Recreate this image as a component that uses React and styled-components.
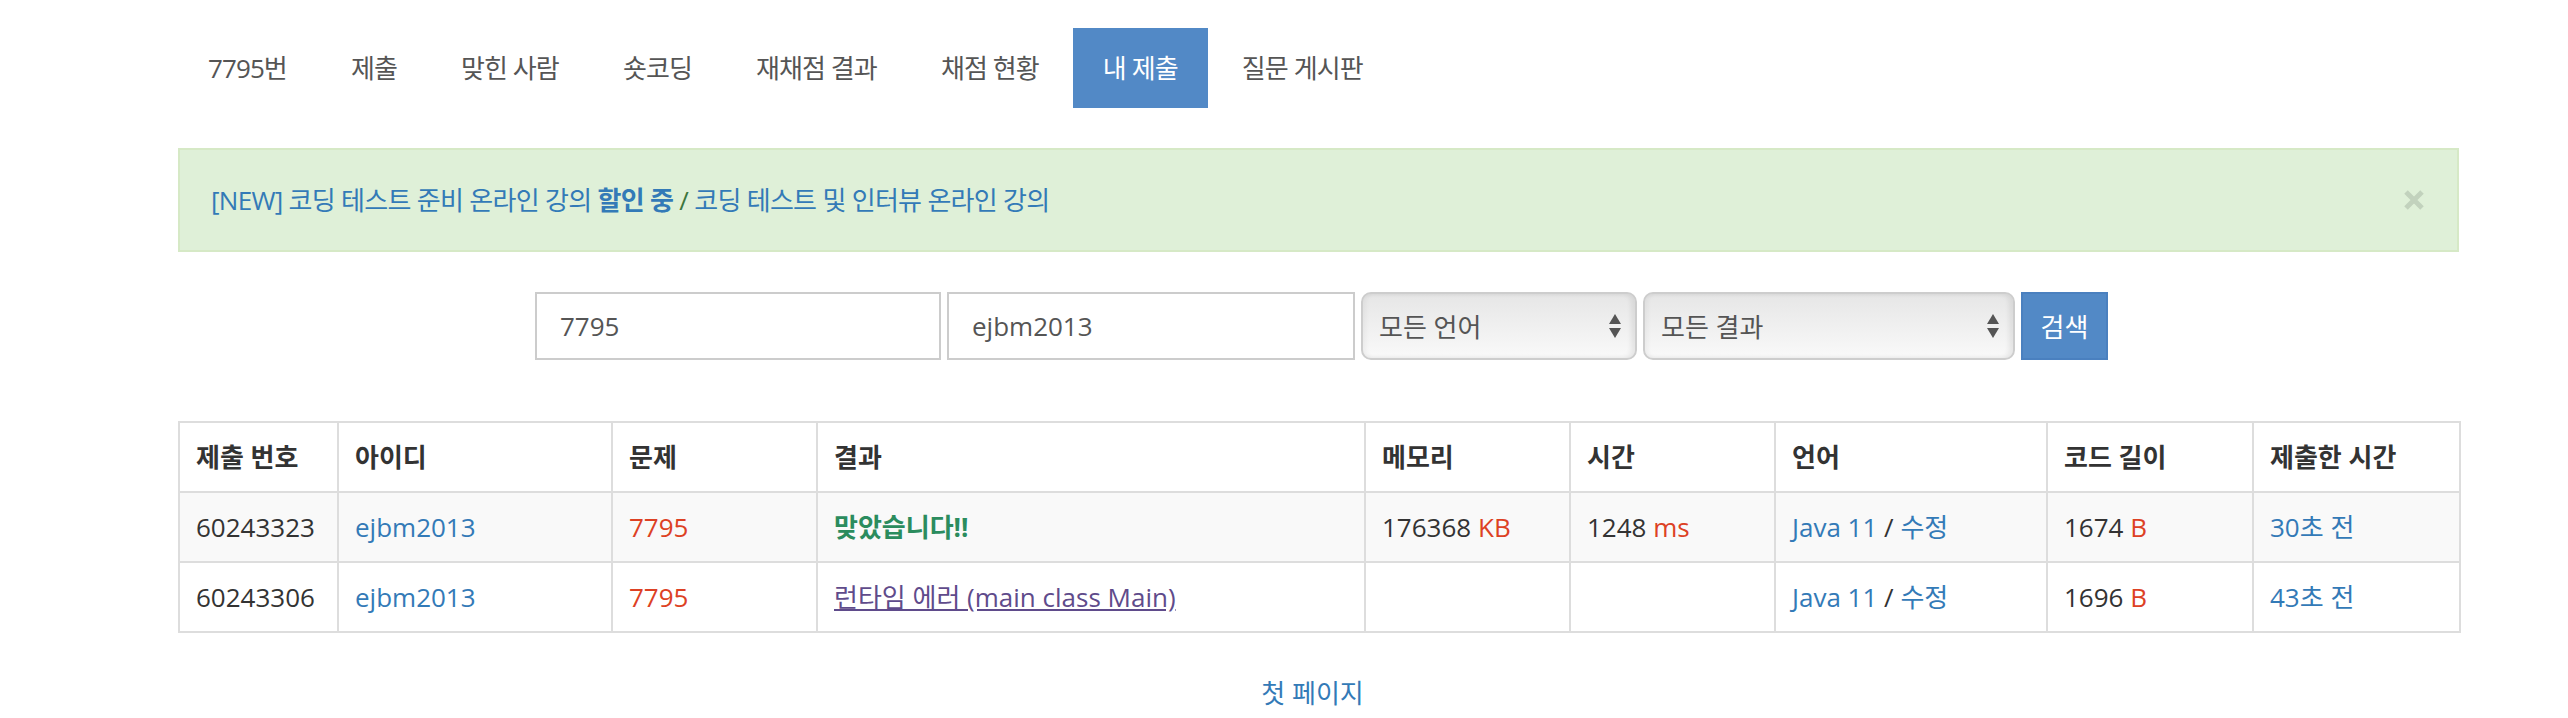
import React from "react";
import styled, { createGlobalStyle } from "styled-components";

const GlobalStyle = createGlobalStyle`
  html, body { margin: 0; padding: 0; background: #fff; }
  body {
    font-family: "Open Sans", "Noto Sans CJK KR", sans-serif;
    font-size: 26px;
    color: #333;
  }
  * { box-sizing: border-box; }
`;

const Page = styled.div`
  width: 2281px;
  margin-left: 178px;
  padding-top: 28px;
  padding-bottom: 20px;
`;

const Nav = styled.ul`
  display: flex;
  gap: 4px;
  margin: 0;
  padding: 0;
  list-style: none;
`;

const NavLink = styled.li`
  padding: 20px 30px;
  line-height: 40px;
  letter-spacing: -0.9px;
  color: ${(p) => (p.$active ? "#fff" : "#555")};
  background: ${(p) => (p.$active ? "#5289c6" : "transparent")};
  white-space: nowrap;
`;

const Alert = styled.div`
  margin-top: 40px;
  display: flex;
  align-items: center;
  justify-content: space-between;
  background: #dff0d8;
  border: 2px solid #d6e9c6;
  padding: 31px 33px 31px 31px;
  line-height: 38px;
  letter-spacing: -0.7px;
  color: #3c763d;
`;

const Link = styled.a`
  color: ${(p) => p.$color || "#337ab7"};
  font-weight: ${(p) => (p.$bold ? "bold" : "normal")};
  text-decoration: ${(p) => (p.$underline ? "underline" : "none")};
`;

const Close = styled.span`
  display: flex;
  width: 20px;
  height: 20px;
`;

const SearchForm = styled.div`
  margin-top: 40px;
  display: flex;
  justify-content: center;
  gap: 6px;
  padding-left: 6px;
`;

const Input = styled.input`
  width: ${(p) => p.$w}px;
  height: 68px;
  border: 2px solid #ccc;
  border-radius: 0;
  padding: 0 23px;
  font: inherit;
  font-size: 26px;
  color: #555;
  background: #fff;
  outline: none;
`;

const SelectBox = styled.div`
  width: ${(p) => p.$w}px;
  height: 68px;
  display: flex;
  align-items: center;
  justify-content: space-between;
  padding: 0 14px 0 16px;
  border: 2px solid #cdcdcd;
  border-radius: 10px;
  background: linear-gradient(#e6e6e6, #f9f9f9);
  box-shadow: inset -4px 0 5px rgba(0, 0, 0, 0.07), inset 3px 0 4px rgba(0, 0, 0, 0.04);
  color: #555;
`;

const Button = styled.button`
  width: 87px;
  height: 68px;
  border: 2px solid #4a80bf;
  background: #5289c6;
  color: #fff;
  font: inherit;
  font-size: 26px;
  padding: 0;
`;

const Table = styled.table`
  margin-top: 61px;
  width: 2281px;
  table-layout: fixed;
  border-collapse: collapse;
`;

const Th = styled.th`
  border: 2px solid #ddd;
  padding: 15px 16px;
  line-height: 38px;
  text-align: left;
  font-weight: bold;
  color: #333;
  white-space: nowrap;
`;

const Tr = styled.tr`
  background: ${(p) => (p.$striped ? "#f9f9f9" : "#fff")};
`;

const Td = styled.td`
  border: 2px solid #ddd;
  padding: 15px 16px;
  line-height: 38px;
  text-align: left;
  color: #333;
  white-space: nowrap;
`;

const Red = styled.span`
  color: #dd4124;
`;

const Pager = styled.div`
  margin-top: 41px;
  text-align: center;
  line-height: 38px;
  padding-right: 12px;
`;

const Arrows = () => (
  <svg width="12" height="28" viewBox="0 0 12 28">
    <path d="M6 2 L12 12 L0 12 Z" fill="#555" />
    <path d="M0 16 L12 16 L6 26 Z" fill="#555" />
  </svg>
);

const CloseIcon = () => (
  <svg width="20" height="20" viewBox="0 0 20 20">
    <path d="M2 2 L18 18 M18 2 L2 18" stroke="#c2d2bd" strokeWidth="5" strokeLinecap="butt" />
  </svg>
);

const cols = [159, 274, 205, 548, 205, 205, 272, 206, 207];

const rows = [
  {
    id: "60243323",
    result: <Link $color="#2b8c5e" $bold>맞았습니다!!</Link>,
    mem: "176368",
    time: "1248",
    len: "1674",
    ago: "30초 전",
  },
  {
    id: "60243306",
    result: (
      <Link $color="#5f4b8b" $underline>
        런타임 에러 (main class Main)
      </Link>
    ),
    mem: null,
    time: null,
    len: "1696",
    ago: "43초 전",
  },
];

const tabs = ["7795번", "제출", "맞힌 사람", "숏코딩", "재채점 결과", "채점 현황", "내 제출", "질문 게시판"];

export default function App() {
  return (
    <>
      <GlobalStyle />
      <Page>
        <Nav>
          {tabs.map((t) => (
            <NavLink key={t} $active={t === "내 제출"}>
              {t}
            </NavLink>
          ))}
        </Nav>

        <Alert>
          <span>
            <Link>[NEW] 코딩 테스트 준비 온라인 강의 </Link>
            <Link $bold>할인 중</Link> / <Link>코딩 테스트 및 인터뷰 온라인 강의</Link>
          </span>
          <Close>
            <CloseIcon />
          </Close>
        </Alert>

        <SearchForm>
          <Input $w={406} defaultValue="7795" readOnly />
          <Input $w={408} defaultValue="ejbm2013" readOnly />
          <SelectBox $w={276}>
            <span>모든 언어</span>
            <Arrows />
          </SelectBox>
          <SelectBox $w={372}>
            <span>모든 결과</span>
            <Arrows />
          </SelectBox>
          <Button>검색</Button>
        </SearchForm>

        <Table>
          <colgroup>
            {cols.map((w, i) => (
              <col key={i} style={{ width: w }} />
            ))}
          </colgroup>
          <thead>
            <tr>
              <Th>제출 번호</Th>
              <Th>아이디</Th>
              <Th>문제</Th>
              <Th>결과</Th>
              <Th>메모리</Th>
              <Th>시간</Th>
              <Th>언어</Th>
              <Th>코드 길이</Th>
              <Th>제출한 시간</Th>
            </tr>
          </thead>
          <tbody>
            {rows.map((r, i) => (
              <Tr key={r.id} $striped={i === 0}>
                <Td>{r.id}</Td>
                <Td>
                  <Link>ejbm2013</Link>
                </Td>
                <Td>
                  <Link $color="#dd4124">7795</Link>
                </Td>
                <Td>{r.result}</Td>
                <Td>
                  {r.mem && (
                    <>
                      {r.mem} <Red>KB</Red>
                    </>
                  )}
                </Td>
                <Td>
                  {r.time && (
                    <>
                      {r.time} <Red>ms</Red>
                    </>
                  )}
                </Td>
                <Td>
                  <Link>Java 11</Link> / <Link>수정</Link>
                </Td>
                <Td>
                  {r.len} <Red>B</Red>
                </Td>
                <Td>
                  <Link>{r.ago}</Link>
                </Td>
              </Tr>
            ))}
          </tbody>
        </Table>

        <Pager>
          <Link>첫 페이지</Link>
        </Pager>
      </Page>
    </>
  );
}
